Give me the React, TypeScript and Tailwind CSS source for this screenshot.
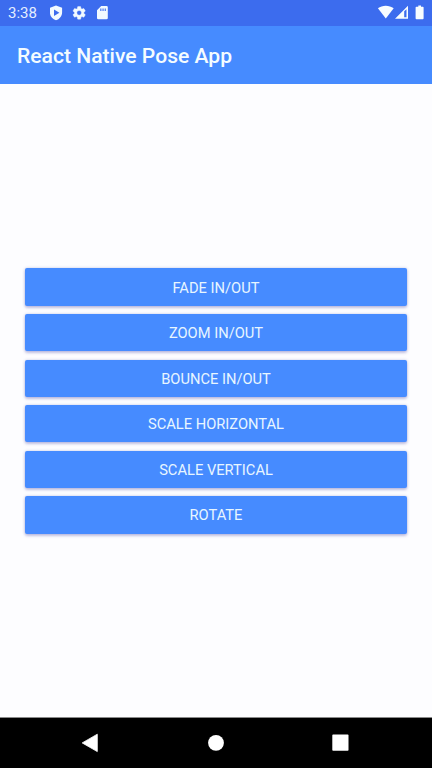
const actions = [
  'FADE IN/OUT',
  'ZOOM IN/OUT',
  'BOUNCE IN/OUT',
  'SCALE HORIZONTAL',
  'SCALE VERTICAL',
  'ROTATE',
];

function StatusBar() {
  return (
    <div className="flex h-[26px] shrink-0 items-center bg-[#3c6cee] text-white">
      <span className="ml-2 w-[42px] text-[15px] leading-[26px] text-[#e4eeff]">3:38</span>
      <svg className="h-[26px] w-[62px]" viewBox="50 0 62 26" fill="#f2faff">
        <path
          fillRule="evenodd"
          d="M56 5.4 62.1 7.7V12.5C62.1 16.2 59.5 19.2 56 20.3C52.5 19.2 49.9 16.2 49.9 12.5V7.7ZM54 9.4V16L59.4 12.7Z"
        />
        <g transform="translate(71.3 5) scale(0.655)">
          <path stroke="#f2faff" strokeWidth="0.6" d="M19.14 12.94c.04-.3.06-.61.06-.94 0-.32-.02-.64-.07-.94l2.03-1.58c.18-.14.23-.41.12-.61l-1.92-3.32c-.12-.22-.37-.29-.59-.22l-2.39.96c-.5-.38-1.03-.7-1.62-.94l-.36-2.54c-.04-.24-.24-.41-.48-.41h-3.84c-.24 0-.43.17-.47.41l-.36 2.54c-.59.24-1.13.57-1.62.94l-2.39-.96c-.22-.08-.47 0-.59.22L2.74 8.87c-.12.21-.08.47.12.61l2.03 1.58c-.05.3-.09.63-.09.94s.02.64.07.94l-2.03 1.58c-.18.14-.23.41-.12.61l1.92 3.32c.12.22.37.29.59.22l2.39-.96c.5.38 1.03.7 1.62.94l.36 2.54c.05.24.24.41.48.41h3.84c.24 0 .44-.17.47-.41l.36-2.54c.59-.24 1.13-.56 1.62-.94l2.39.96c.22.08.47 0 .59-.22l1.92-3.32c.12-.22.07-.47-.12-.61zM12 15.6A3.6 3.6 0 1 1 12 8.4a3.6 3.6 0 0 1 0 7.2z" />
        </g>
        <path
          fillRule="evenodd"
          d="M101.2 6H106.5Q107.8 6 107.8 7.3V18Q107.8 19.3 106.5 19.3H98.3Q97 19.3 97 18V10.2ZM100.3 8.4V10.9H101.4V8.4ZM102.5 8.4V10.9H103.6V8.4ZM104.7 8.4V10.9H105.8V8.4Z"
        />
      </svg>
      <svg className="ml-auto h-[26px] w-[56px]" viewBox="376 0 56 26" fill="#f8fdff">
        <path d="M377.9 8.3C382.3 4.8 389.2 4.8 393.7 8.3L385.8 18.4Z" />
        <path fillRule="evenodd" d="M408 5.8V18.8H395ZM404.2 11.2V17.2H406.5V9.2Z" />
        <path d="M418.3 5.6H421V6.7H422.8Q423.6 6.7 423.6 7.5V18.3Q423.6 19.2 422.8 19.2H416.5Q415.6 19.2 415.6 18.3V7.5Q415.6 6.7 416.5 6.7H418.3Z" />
      </svg>
    </div>
  );
}

function NavigationBar() {
  return (
    <div className="h-[51px] shrink-0 border-t border-[#8a8a8a] bg-black">
      <svg className="block h-[50px] w-[432px]" viewBox="0 718 432 50" fill="#fff">
        <path d="M97.3 734.2V751.6L82.2 742.9Z" stroke="#fff" strokeWidth="0.8" strokeLinejoin="round" />
        <circle cx="216" cy="742.8" r="7.9" />
        <rect x="332.3" y="734.6" width="16.2" height="16.2" rx="0.8" />
      </svg>
    </div>
  );
}

export default function App() {
  return (
    <div className="flex h-[768px] w-[432px] flex-col overflow-hidden bg-[#fdfdff] font-['Roboto',sans-serif]">
      <StatusBar />
      <header className="flex h-[58px] shrink-0 items-center bg-[#468bff] pt-px pl-[17px]">
        <h1 className="text-[21.1px] leading-[57px] font-medium whitespace-nowrap text-[#f4fcff]">
          React Native Pose App
        </h1>
      </header>
      <main className="flex flex-1 flex-col justify-center gap-[8.2px] px-[25px] pt-px">
        {actions.map((label) => (
          <button
            key={label}
            className="h-[37.4px] w-full rounded-[2px] bg-[#468bff] pt-[2px] text-center text-[14.7px] leading-[35px] text-[#e8f6ff] shadow-[0_2px_3px_rgba(70,60,160,0.28),0_0_3px_rgba(70,90,180,0.3)]"
          >
            {label}
          </button>
        ))}
      </main>
      <NavigationBar />
    </div>
  );
}
